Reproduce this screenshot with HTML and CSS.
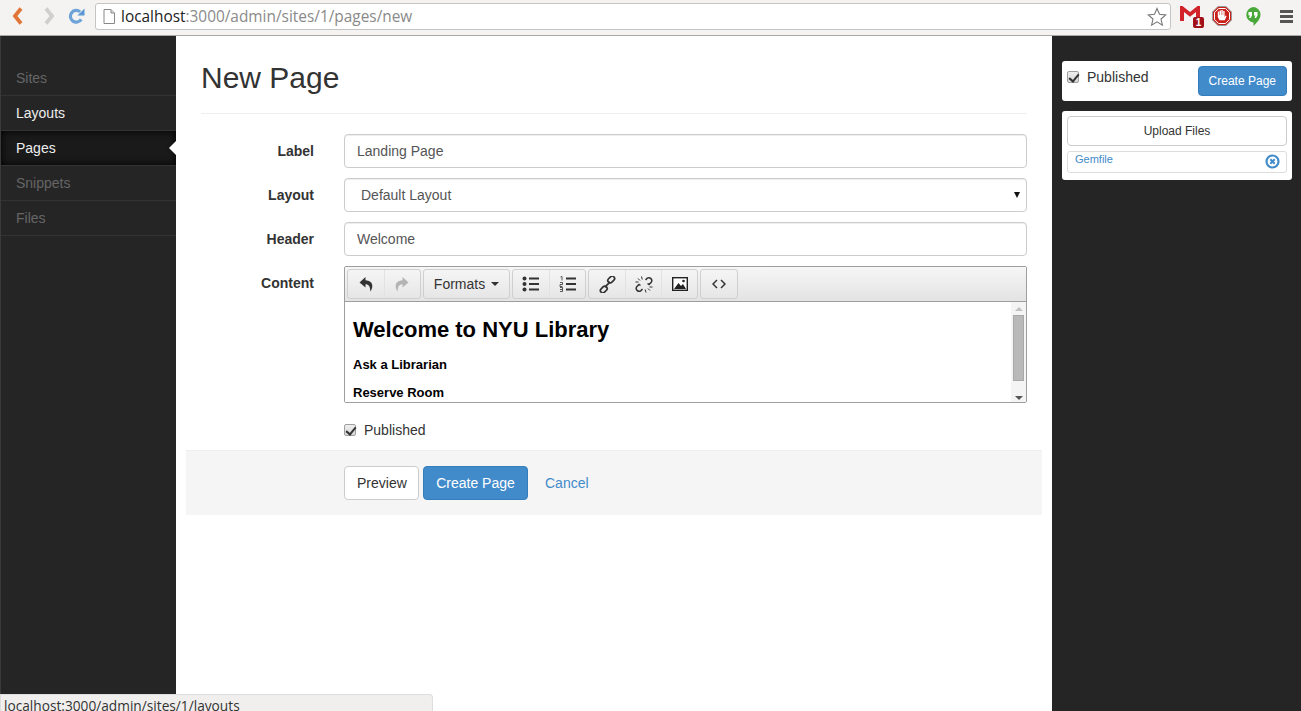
FILE: index.html
```html
<!DOCTYPE html>
<html lang="en">
<head>
    <meta charset="UTF-8">
    <title>New Page</title>
    <link rel="stylesheet" href="styles.css">
</head>
<body>
    <!-- browser toolbar -->
    <div class="chrome-bar">
        <svg class="nav-back" width="11" height="18" viewBox="0 0 11 18"><path d="M9 1.500 3 9l6 7.500" fill="none" stroke="#e0763a" stroke-width="3.800"/></svg>
        <svg class="nav-forward" width="11" height="18" viewBox="0 0 11 18"><path d="M2 1.500 8 9l-6 7.500" fill="none" stroke="#cfcfcf" stroke-width="3.800"/></svg>
        <svg class="nav-reload" width="17" height="18" viewBox="0 0 18 18"><path d="M14 12.500A6.200 6.200 0 1 1 12.800 4.600" fill="none" stroke="#6ea3d8" stroke-width="3.400"/><path d="M10 8.500h7.500V1z" fill="#5a97d4"/></svg>
        <div class="address-bar">
            <svg width="12" height="15" viewBox="0 0 12 15"><path d="M1 .5h7l3.500 3.500v10.500H1z" fill="#fff" stroke="#888"/><path d="M8 .5V4h3.500" fill="#ddd" stroke="#888"/></svg>
            <span class="url"><span class="url-host">localhost</span>:3000/admin/sites/1/pages/new</span>
            <svg width="20" height="19" viewBox="0 0 20 19"><path d="m10 1.500 2.500 5.800 6.200.6-4.700 4.100 1.400 6.100L10 14.900l-5.400 3.200L6 12 1.300 7.900l6.200-.6z" fill="#fff" stroke="#777" stroke-width="1.100"/></svg>
        </div>
        <div class="gmail">
            <svg width="20" height="15" viewBox="0 0 20 15"><rect width="20" height="15" fill="#f3f3f3"/><path d="M0 0h2.500L10 6l7.500-6H20v15h-4V6l-6 4.800L4 6v9H0z" fill="#d2222a"/></svg>
            <span class="gmail-count">1</span>
        </div>
        <svg class="ext-stop" width="20" height="20" viewBox="0 0 20 20"><path d="M6 .5h8L19.500 6v8L14 19.500H6L.5 14V6z" fill="#c8211c" stroke="#999"/><path d="M6.600 2.500h6.800l4.100 4.100v6.800l-4.100 4.100H6.600l-4.100-4.100V6.600z" fill="#c8211c" stroke="#fff"/><path d="M5.800 5.500h1.400V9h.4V4.500H9V9h.4V4h1.400v5h.4V5h1.400v6l1-1.500 1 .5-1.800 4.300H7.500L5.800 11z" fill="#fff"/></svg>
        <svg class="ext-hangouts" width="16" height="19" viewBox="0 0 16 19"><path d="M8 0a7.500 7.500 0 0 1 7.500 7.500c0 4.500-3.500 8-7 11.500v-3.500A7.800 7.800 0 0 1 8 0z" fill="#4aa83a"/><path d="M3.500 5h3.500v3.500L5.500 11H4l1-2.500H3.500zm5.500 0h3.500v3.500L11 11H9.500l1-2.500H9z" fill="#fff"/></svg>
        <div class="menu-icon"><span></span><span></span><span></span></div>
    </div>

    <div class="layout">
        <ul class="side-nav">
            <li class="muted">Sites</li>
            <li>Layouts</li>
            <li class="active">Pages</li>
            <li class="muted">Snippets</li>
            <li class="muted">Files</li>
        </ul>

        <div class="content">
            <h1 class="page-title">New Page</h1>
            <form class="page-form">
                <div class="form-row">
                    <label class="form-label">Label</label>
                    <input class="form-control" type="text" value="Landing Page">
                </div>
                <div class="form-row">
                    <label class="form-label">Layout</label>
                    <div class="select-wrap">
                        <select class="form-control select-control">
                            <option>Default Layout</option>
                        </select>
                    </div>
                </div>
                <div class="form-row">
                    <label class="form-label">Header</label>
                    <input class="form-control" type="text" value="Welcome">
                </div>
                <div class="form-row">
                    <label class="form-label">Content</label>
                    <div class="editor">
                        <div class="editor-toolbar">
                            <div class="tool-group">
                                <span class="tool tool-undo"><svg width="15" height="16" viewBox="0 0 15 16"><path d="M6.500 1 .5 6.500l6 5V8.300c3.200 0 4.800 2 4.800 7.200 3-4 3.700-10.500-4.800-11.300z" fill="#333"/></svg></span>
                                <span class="tool tool-redo"><svg width="15" height="16" viewBox="0 0 15 16"><path d="M8.500 1l6 5.500-6 5V8.300c-3.200 0-4.800 2-4.800 7.200-3-4-3.700-10.500 4.800-11.300z" fill="#b4b4b4"/></svg></span>
                            </div>
                            <div class="tool-group">
                                <span class="tool tool-text">Formats <i class="caret"></i></span>
                            </div>
                            <div class="tool-group">
                                <span class="tool"><svg width="18" height="16" viewBox="0 0 18 16"><g fill="#333"><circle cx="2.500" cy="2.500" r="2"/><circle cx="2.500" cy="8" r="2"/><circle cx="2.500" cy="13.500" r="2"/><path d="M7 1.500h10v2H7zM7 7h10v2H7zM7 12.500h10v2H7z"/></g></svg></span>
                                <span class="tool"><svg width="18" height="16" viewBox="0 0 18 16"><path d="M7 1.500h10v2H7zM7 7h10v2H7zM7 12.500h10v2H7z" fill="#333"/><path d="M1.500 1 3 .5v4M1 6.500h2.500v2H1v2h2.500M1 11.500h2.500v4H1M1 13.500h2.500" fill="none" stroke="#333" stroke-width=".8"/></svg></span>
                            </div>
                            <div class="tool-group">
                                <span class="tool"><svg width="17" height="17" viewBox="0 0 16 16"><g fill="none" stroke="#333" stroke-width="1.600"><rect x="8" y="1" width="7" height="4.500" rx="2.200" transform="rotate(-45 11.500 3.250)"/><rect x="1" y="10.500" width="7" height="4.500" rx="2.200" transform="rotate(-45 4.500 12.750)"/><path d="m5.500 10.500 5-5"/></g></svg></span>
                                <span class="tool"><svg width="18" height="17" viewBox="0 0 18 17"><g fill="none" stroke="#333" stroke-width="1.500"><path d="M10.500 4 12.300 2.200a2.900 2.900 0 0 1 4 4L14 8.500l-1.500-1M7.500 13 5.700 14.800a2.900 2.900 0 0 1-4-4L4 8.500l1.500 1"/></g><g fill="none" stroke="#333" stroke-width="1"><path d="M6.500 .5l.8 3M3 2.500l2 2M.5 6h3M11 16.500l-.8-3M15 14.500l-2-2M17.500 11h-3"/></g></svg></span>
                                <span class="tool"><svg width="16" height="14" viewBox="0 0 16 14"><rect x=".7" y=".7" width="14.600" height="12.600" fill="#fff" stroke="#222" stroke-width="1.400"/><path d="M2 12 6.500 6l2.500 3 2-2 3 5z" fill="#222"/><circle cx="11.500" cy="4" r="1.300" fill="#222"/></svg></span>
                            </div>
                            <div class="tool-group">
                                <span class="tool"><svg width="14" height="10" viewBox="0 0 14 10"><path d="M5 1 1 5l4 4M9 1l4 4-4 4" fill="none" stroke="#333" stroke-width="1.500"/></svg></span>
                            </div>
                        </div>
                        <div class="editor-body">
                            <div class="editor-text">
                                <h1>Welcome to NYU Library</h1>
                                <p><strong>Ask a Librarian</strong></p>
                                <p><strong>Reserve Room</strong></p>
                            </div>
                            <div class="scrollbar">
                                <i class="arrow-up"></i>
                                <span class="scroll-thumb"></span>
                                <i class="arrow-down"></i>
                            </div>
                        </div>
                    </div>
                </div>
                <label class="check-row"><input class="check" type="checkbox" checked> Published</label>
                <div class="form-actions">
                    <button type="button" class="btn btn-default btn-preview">Preview</button>
                    <button type="button" class="btn btn-primary btn-create">Create Page</button>
                    <a class="cancel-link" href="#">Cancel</a>
                </div>
            </form>
        </div>

        <div class="right-col">
            <div class="panel publish-panel">
                <label class="publish-check"><input class="check" type="checkbox" checked> Published</label>
                <button type="button" class="btn btn-primary btn-small">Create Page</button>
            </div>
            <div class="panel files-panel">
                <button type="button" class="btn btn-default btn-small btn-block">Upload Files</button>
                <div class="file-row">
                    <a href="#">Gemfile</a>
                    <svg width="15" height="15" viewBox="0 0 15 15"><circle cx="7.500" cy="7.500" r="6" fill="none" stroke="#428bca" stroke-width="2.200"/><path d="m5.300 5.300 4.400 4.400m0-4.400-4.400 4.400" stroke="#428bca" stroke-width="2"/></svg>
                </div>
            </div>
        </div>
    </div>

    <div class="status-bubble">localhost:3000/admin/sites/1/layouts</div>
</body>
</html>
```

FILE: styles.css
```css
* {
    box-sizing: border-box;
}
html, body {
    height: 711px;
    overflow: hidden;
}
body {
    margin: 0;
    display: flex;
    flex-direction: column;
    font-family: "Liberation Sans", Arial, sans-serif;
    font-size: 14px;
    color: #333;
    background: #fff;
}

/* browser toolbar */
.chrome-bar {
    height: 36px;
    flex: none;
    display: flex;
    align-items: center;
    padding: 0 0 3px 12px;
    background: #f4f3f1;
    border-bottom: 1px solid #a8a8a8;
}
.chrome-bar svg {
    flex: none;
}
.nav-back {
    margin-right: 21px;
}
.nav-forward {
    margin-right: 13px;
}
.nav-reload {
    margin-right: 10px;
}
.address-bar {
    width: 1076px;
    height: 27px;
    display: flex;
    align-items: center;
    padding: 0 3px 0 7px;
    gap: 6px;
    background: #fff;
    border: 1px solid #c4c4c4;
    border-radius: 3px;
    margin-right: 9px;
    flex: none;
}
.url {
    font-family: "Open Sans", "Noto Sans", sans-serif;
    font-size: 15.400px;
    color: #8a8a8a;
    flex: 1;
    white-space: nowrap;
}
.url-host {
    color: #222;
}
.gmail {
    position: relative;
    width: 24px;
    height: 22px;
    margin-right: 8px;
    flex: none;
}
.gmail svg {
    display: block;
    margin-top: 1px;
}
.gmail-count {
    position: absolute;
    right: 0;
    top: 12px;
    width: 11px;
    height: 11px;
    background: #a30f18;
    border-radius: 2px;
    color: #fff;
    font-size: 10px;
    font-weight: bold;
    line-height: 11px;
    text-align: center;
}
.ext-stop {
    margin-right: 13px;
}
.ext-hangouts {
    margin-right: 19px;
}
.menu-icon {
    display: flex;
    flex-direction: column;
    gap: 2px;
}
.menu-icon span {
    display: block;
    width: 13px;
    height: 3px;
    background: #555;
}

.layout {
    flex: 1;
    display: flex;
    min-height: 0;
}

/* left nav */
.side-nav {
    width: 176px;
    flex: none;
    margin: 0;
    padding: 25px 0 0;
    list-style: none;
    background: #252525;
    border-left: 1px solid #3a3a3a;
}
.side-nav li {
    position: relative;
    height: 35px;
    line-height: 34px;
    padding-left: 15px;
    color: #eee;
    border-bottom: 1px solid #333;
}
.side-nav .muted {
    color: #666;
}
.side-nav .active {
    color: #eee;
    background: #1a1a1a;
    box-shadow: inset 0 0 8px #000;
}
.side-nav .active::after {
    content: "";
    position: absolute;
    right: 0;
    top: 10px;
    border: 7px solid transparent;
    border-left: 0;
    border-right-color: #fff;
}

/* main column */
.content {
    width: 876px;
    flex: none;
    padding: 25px 10px 0;
}
.page-title {
    margin: 0 15px 20px;
    padding-bottom: 18px;
    font-size: 30px;
    font-weight: 500;
    line-height: 34px;
    color: #333;
    border-bottom: 1px solid #eee;
}
.page-form {
    display: flex;
    flex-direction: column;
}
.form-row {
    display: flex;
    padding-left: 15px;
    padding-right: 15px;
    margin-bottom: 10px;
}
.form-label {
    width: 113px;
    margin-right: 30px;
    flex: none;
    padding-top: 8px;
    text-align: right;
    font-weight: bold;
    line-height: 18px;
}
.form-control {
    flex: 1;
    width: 100%;
    height: 34px;
    padding: 6px 12px;
    font-family: inherit;
    font-size: 14px;
    color: #555;
    background: #fff;
    border: 1px solid #ccc;
    border-radius: 4px;
    box-shadow: inset 0 1px 1px rgba(0, 0, 0, 0.075);
}
.select-wrap {
    flex: 1;
    position: relative;
}
.select-control {
    appearance: none;
    padding-left: 16px;
}
.select-wrap::after {
    content: "";
    position: absolute;
    right: 7px;
    top: 14px;
    border: 3.500px solid transparent;
    border-top: 6px solid #111;
    border-bottom: 0;
}

/* editor */
.editor {
    flex: 1;
    height: 137px;
    border: 1px solid #9e9e9e;
    border-radius: 2px;
    overflow: hidden;
}
.editor-toolbar {
    height: 35px;
    display: flex;
    gap: 2px;
    padding: 2px;
    background: linear-gradient(#f6f6f6, #e3e3e3);
    border-bottom: 1px solid #9e9e9e;
}
.tool-group {
    display: flex;
    height: 30px;
    background: linear-gradient(#f5f5f5, #e6e6e6);
    border: 1px solid #cfcfcf;
    border-radius: 3px;
}
.tool {
    width: 36px;
    display: flex;
    align-items: center;
    justify-content: center;
    border-left: 1px solid #e2e2e2;
}
.tool:first-child {
    border-left: 0;
}
.tool-undo {
    padding-left: 1px;
}
.tool-redo {
    padding-right: 3px;
}
.tool-text {
    width: 85px;
    gap: 6px;
    color: #333;
}
.caret {
    border: 4px solid transparent;
    border-top: 4px solid #333;
    border-bottom: 0;
}
.editor-body {
    height: 101px;
    display: flex;
    overflow: hidden;
    background: #fff;
}
.editor-text {
    flex: 1;
    padding: 0 8px;
    color: #000;
    font-size: 13px;
}
.editor-text h1 {
    margin: 15px 0 15px;
    font-size: 22px;
    line-height: 25px;
}
.editor-text p {
    margin: 0 0 13px;
    line-height: 15px;
}
.scrollbar {
    width: 15px;
    display: flex;
    flex-direction: column;
    align-items: center;
    padding: 5px 0 3px;
    background: #f4f4f4;
}
.scroll-thumb {
    width: 11px;
    height: 66px;
    margin: 4px 0 0;
    background: #b9b9b9;
    border: 1px solid #a9a9a9;
}
.arrow-up {
    border: 4px solid transparent;
    border-bottom: 4px solid #c2c2c2;
    border-top: 0;
}
.arrow-down {
    margin-top: auto;
    border: 4px solid transparent;
    border-top: 4px solid #555;
    border-bottom: 0;
}

/* checkboxes, native ones are blue here */
.check {
    appearance: none;
    position: relative;
    width: 12px;
    height: 12px;
    margin: 0 8px 0 0;
    flex: none;
    background: linear-gradient(#eee, #d8d8d8);
    border: 1px solid #a0a0a0;
    border-radius: 2px;
}
.check::after {
    content: "";
    position: absolute;
    left: 3px;
    top: 0;
    width: 4px;
    height: 8px;
    border: solid #333;
    border-width: 0 2px 2px 0;
    transform: rotate(40deg);
}
.check-row {
    display: flex;
    align-items: center;
    margin: 7px 0 0 158px;
    height: 20px;
    line-height: 20px;
}
.form-actions {
    height: 65px;
    margin-top: 10px;
    display: flex;
    align-items: center;
    padding-left: 158px;
    gap: 4px;
    background: #f5f5f5;
    border-top: 1px solid #eee;
}
.btn {
    height: 34px;
    padding: 0 12px;
    font-family: inherit;
    font-size: 14px;
    border: 1px solid #ccc;
    border-radius: 4px;
    background: #fff;
    color: #333;
}
.btn-primary {
    background: #428bca;
    border-color: #357ebd;
    color: #fff;
}
.btn-preview {
    width: 75px;
}
.btn-create {
    width: 105px;
}
.cancel-link {
    margin-left: 13px;
    color: #428bca;
    text-decoration: none;
}

/* right column */
.right-col {
    flex: 1;
    padding: 25px 9px 0 10px;
    background: #252525;
}
.panel {
    background: #fff;
    border-radius: 3px;
    padding: 5px;
}
.publish-panel {
    height: 40px;
    display: flex;
    justify-content: space-between;
    margin-bottom: 10px;
}
.publish-check {
    display: flex;
    align-items: center;
    height: 20px;
    padding-top: 1px;
    line-height: 20px;
}
.btn-small {
    height: 30px;
    padding: 0 10px;
    font-size: 12px;
}
.btn-block {
    display: block;
    width: 100%;
}
.files-panel {
    height: 69px;
}
.file-row {
    height: 22px;
    margin-top: 5px;
    display: flex;
    justify-content: space-between;
    padding: 0 6px 0 7px;
    border: 1px solid #ddd;
    border-radius: 3px;
    font-size: 11px;
    line-height: 14px;
}
.file-row a {
    color: #428bca;
    text-decoration: none;
}
.file-row svg {
    margin-top: 2px;
}

/* link hover bubble of the browser */
.status-bubble {
    position: absolute;
    left: 0;
    top: 694px;
    width: 433px;
    height: 17px;
    padding-left: 3px;
    font-family: "Open Sans", "Noto Sans", sans-serif;
    font-size: 13.700px;
    line-height: 21px;
    color: #333;
    white-space: nowrap;
    overflow: hidden;
    background: #f0efed;
    border: 1px solid #ddd;
    border-bottom: 0;
    border-radius: 0 4px 0 0;
}
```
